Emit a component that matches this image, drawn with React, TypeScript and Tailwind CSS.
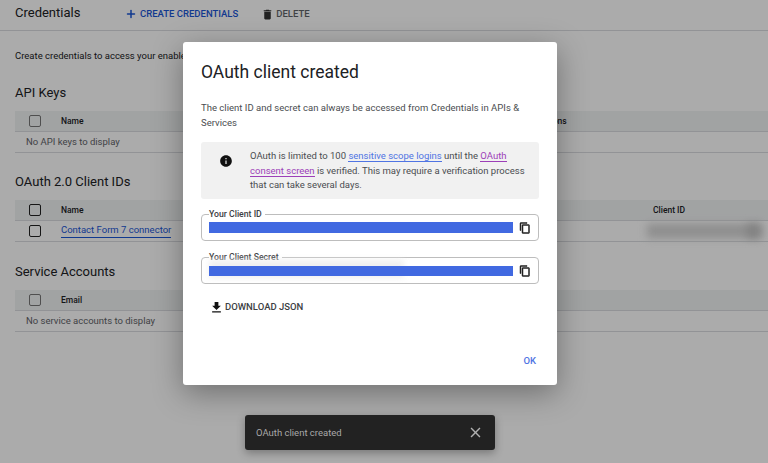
import React from "react";
import { Plus } from "lucide-react";

const Check = ({ dark }: { dark?: boolean }) => (
  <span className={`block w-[12px] h-[12px] rounded-[2px] border-[1.5px] ${dark ? "border-[#222]" : "border-[#777]"}`} />
);

function Table({ label, dark, children }: { label: string; dark?: boolean; children?: React.ReactNode }) {
  return (
    <div className="ml-[15px]">
      <div className="relative flex items-center h-[21px] bg-[#f1f3f4] border-b border-[#dadce0] text-[8.5px] font-medium text-[#202124]">
        <span className="ml-[14px] w-[32px]"><Check dark={dark} /></span>
        <span>{label}</span>
        {children}
      </div>
    </div>
  );
}

function CopyIcon() {
  return (
    <svg viewBox="0 0 24 24" className="ml-[6px] w-[12px] h-[12px] fill-[#212121] stroke-[#212121] stroke-[1px]">
      <path d="M16 1H4c-1.1 0-2 .9-2 2v14h2V3h12V1zm3 4H8c-1.1 0-2 .9-2 2v14c0 1.1.9 2 2 2h11c1.1 0 2-.9 2-2V7c0-1.1-.9-2-2-2zm0 16H8V7h11v14z" />
    </svg>
  );
}

export default function App() {
  return (
    <div className="relative w-[768px] h-[463px] overflow-hidden bg-white font-['Roboto',sans-serif] text-[#202124]">
      {/* Page behind the dialog */}
      <div className="flex items-center h-[31px] border-b border-[#dadce0] pl-[15px] pb-[2px]">
        <span className="w-[110px] text-[13px] pb-[2px]">Credentials</span>
        <Plus className="w-[12px] h-[12px] text-[#1a56d6]" strokeWidth={3} />
        <span className="ml-[3px] text-[9.5px] font-medium text-[#1a56d6]">CREATE CREDENTIALS</span>
        <svg viewBox="0 0 24 24" className="ml-[23px] w-[13px] h-[13px] fill-[#333]">
          <path d="M6 19c0 1.1.9 2 2 2h8c1.1 0 2-.9 2-2V7H6v12zM19 4h-3.5l-1-1h-5l-1 1H5v2h14V4z" />
        </svg>
        <span className="ml-[2px] text-[9.5px] font-medium text-[#5f6368]">DELETE</span>
      </div>
      <p className="ml-[15px] mt-[18px] text-[9.5px] leading-[14px]">Create credentials to access your enabled APIs.</p>

      <h2 className="ml-[15px] mt-[21px] text-[13px] leading-[18px]">API Keys</h2>
      <div className="mt-[9px]">
        <Table label="Name">
          <span className="absolute left-[506px]">Restrictions</span>
        </Table>
        <div className="ml-[15px] h-[20.5px] flex items-center pl-[11px] border-b border-[#dadce0] text-[9.5px] text-[#5f6368]">No API keys to display</div>
      </div>

      <h2 className="ml-[15px] mt-[20.5px] text-[13px] leading-[18px]">OAuth 2.0 Client IDs</h2>
      <div className="mt-[9px]">
        <Table label="Name" dark>
          <span className="absolute left-[638px]">Client ID</span>
        </Table>
        <div className="relative ml-[15px] h-[20.5px] flex items-center border-b border-[#dadce0]">
          <span className="ml-[14px] w-[32px]"><Check dark /></span>
          <span className="text-[9.5px] text-[#1a56d6] border-b border-[#1a56d6]">Contact Form 7 connector</span>
          <div className="absolute left-[632px] top-[3px] w-[116px] h-[14px] bg-[#d4d4d4] blur-[4px]" />
          <div className="absolute left-[732px] top-[3px] w-[12px] h-[14px] bg-[#c0c0c0] blur-[4px]" />
        </div>
      </div>

      <h2 className="ml-[15px] mt-[21.5px] text-[13px] leading-[18px]">Service Accounts</h2>
      <div className="mt-[9px]">
        <Table label="Email" />
        <div className="ml-[15px] h-[20.5px] flex items-center pl-[11px] border-b border-[#dadce0] text-[9.5px] text-[#5f6368]">No service accounts to display</div>
      </div>

      {/* Scrim */}
      <div className="absolute inset-0 bg-black/[0.33]" />

      {/* Dialog */}
      <div className="absolute left-[183px] top-[42px] w-[374px] h-[343px] rounded-[3px] bg-white shadow-[0_8px_30px_rgba(0,0,0,0.35)] px-[18px] flex flex-col">
        <h1 className="mt-[19px] text-[17.5px] leading-[22px] text-[#202124]">OAuth client created</h1>
        <p className="mt-[18px] text-[9.5px] leading-[14.5px] tracking-[0.02px] text-[#4a4d50]">
          The client ID and secret can always be accessed from Credentials in APIs &amp; Services
        </p>
        <div className="mt-[12px] h-[57px] w-[338px] rounded-[3px] bg-[#f1f1f1] flex pl-[18px] pr-[10px] pt-[7px]">
          <svg viewBox="0 0 24 24" className="mt-[5px] w-[14px] h-[14px] shrink-0 fill-[#111]">
            <path d="M12 2C6.48 2 2 6.48 2 12s4.48 10 10 10 10-4.48 10-10S17.52 2 12 2zm1 15h-2v-6h2v6zm0-8h-2V7h2v2z" />
          </svg>
          <p className="ml-[17px] text-[9.5px] leading-[14.5px] text-[#4a4d50]">
            OAuth is limited to 100 <a className="text-[#4f74e3] border-b border-[#4f74e3]">sensitive scope logins</a> until the <a className="text-[#9c3fb8] border-b border-[#9c3fb8]">OAuth consent screen</a> is verified. This may require a verification process that can take several days.
          </p>
        </div>

        <fieldset className="mt-[11px] w-[338px] h-[31px] border border-[#bdbdbd] rounded-[4px] px-[7px]">
          <legend className="px-[0px] pr-[3px] text-[8.7px] leading-[9px] font-medium text-[#3c4043]">Your Client ID</legend>
          <div className="flex items-center h-[24px] pb-[7px]">
            <div className="w-[304px] h-[11px] bg-[#4169e1]" />
            <CopyIcon />
          </div>
        </fieldset>

        <fieldset className="mt-[11.5px] w-[338px] h-[31px] border border-[#bdbdbd] rounded-[4px] px-[7px]">
          <legend className="px-[0px] pr-[3px] text-[8.7px] leading-[9px] font-medium text-[#3c4043]">Your Client Secret</legend>
          <div className="relative flex items-center h-[24px] pb-[6px]">
            <div className="absolute left-0 top-[-2px] w-[195px] h-[18px] bg-[#efefef] blur-[3px]" />
            <div className="relative w-[304px] h-[10px] bg-[#4169e1]" />
            <CopyIcon />
          </div>
        </fieldset>

        <div className="mt-[16px] ml-[8px] flex items-center">
          <svg viewBox="0 0 24 24" className="w-[15px] h-[15px] fill-[#111]">
            <path d="M19 9h-4V3H9v6H5l7 7 7-7zM5 18v2h14v-2H5z" />
          </svg>
          <span className="ml-[1px] text-[9.5px] font-medium text-[#3c4043]">DOWNLOAD JSON</span>
        </div>

        <div className="mt-auto mb-[17px] flex justify-end pr-[3px]">
          <span className="text-[9.5px] font-medium text-[#4f74e3]">OK</span>
        </div>
      </div>

      {/* Snackbar */}
      <div className="absolute left-[245px] top-[415px] w-[250px] h-[35px] rounded-[3px] bg-[#222] shadow-[0_3px_8px_rgba(0,0,0,0.3)] flex items-center justify-between pl-[11px] pr-[11.5px]">
        <span className="pt-[1px] text-[9.5px] text-[#a8a8a8]">OAuth client created</span>
        <svg viewBox="0 0 24 24" className="mb-[1px] w-[17px] h-[17px] fill-[#b0b0b0]">
          <path d="M19 6.41 17.59 5 12 10.59 6.41 5 5 6.41 10.59 12 5 17.59 6.41 19 12 13.41 17.59 19 19 17.59 13.41 12z" />
        </svg>
      </div>
    </div>
  );
}
